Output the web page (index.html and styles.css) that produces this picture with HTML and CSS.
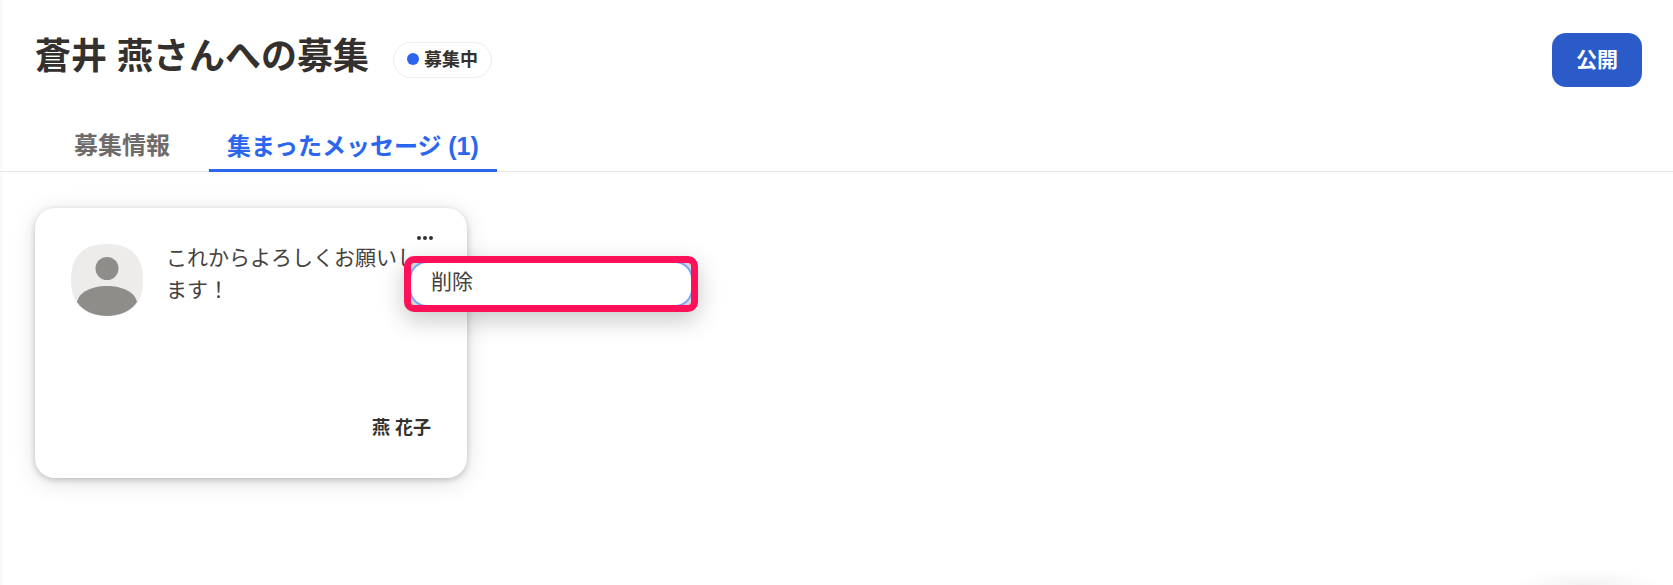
FILE: index.html
```html
<!DOCTYPE html>
<html lang="ja">
<head>
    <meta charset="UTF-8">
    <meta name="viewport" content="width=device-width, initial-scale=1.0">
    <title>蒼井 燕さんへの募集</title>
    <link rel="stylesheet" href="styles.css">
</head>
<body>
    <header class="page-header">
        <div class="title-group">
            <h1 class="page-title">蒼井 燕さんへの募集</h1>
            <span class="status-badge"><span class="status-dot"></span><span class="status-label">募集中</span></span>
        </div>
        <button class="publish-btn">公開</button>
    </header>

    <nav class="tabs">
        <a class="tab">募集情報</a>
        <a class="tab tab-active">集まったメッセージ <span class="tab-count">(1)</span></a>
    </nav>

    <main class="content">
        <div class="message-card">
            <button class="more-btn" aria-label="メニュー">
                <svg width="16" height="4" viewBox="0 0 16 4"><circle cx="2" cy="2" r="2"/><circle cx="8" cy="2" r="2"/><circle cx="14" cy="2" r="2"/></svg>
            </button>
            <div class="message-body">
                <svg class="avatar" width="72" height="72" viewBox="0 0 72 72">
                    <path class="avatar-bg" d="M36 0C60 0 72 12 72 36S60 72 36 72 0 60 0 36 12 0 36 0Z"/>
                    <circle class="avatar-fg" cx="36" cy="24.5" r="11.5"/>
                    <path class="avatar-fg" d="M6 58C8 48 21 42 36 42S64 48 66 58C60 67 48 72 36 72S12 67 6 58Z"/>
                </svg>
                <p class="message-text">これからよろしくお願いします！</p>
            </div>
            <div class="message-sender">燕 花子</div>
            <div class="context-menu">
                <div class="context-item">削除</div>
            </div>
        </div>
    </main>

    <div class="fab-shadow"></div>
</body>
</html>
```

FILE: styles.css
```css
* {
    box-sizing: border-box;
}
html, body {
    height: 100%;
}
body {
    margin: 0;
    background: #fff;
    color: #33302e;
    font-family: "Liberation Sans", "Noto Sans CJK JP", sans-serif;
    overflow: hidden;
    position: relative;
    box-shadow: inset 4px 0 4px -3px rgba(0, 0, 0, 0.05);
}
.page-header {
    display: flex;
    justify-content: space-between;
    align-items: flex-start;
    padding: 33px 31px 0 35px;
    height: 112px;
}
.title-group {
    display: flex;
    align-items: center;
    gap: 24px;
    padding-top: 5px;
}
.page-title {
    margin: -3px 0 3px;
    font-size: 36px;
    line-height: 44px;
    font-weight: 700;
}
.status-badge {
    display: flex;
    align-items: center;
    gap: 5px;
    height: 36px;
    padding: 0 13px;
    border: 1px solid #eeedec;
    border-radius: 18px;
    font-size: 18px;
    font-weight: 700;
}
.status-dot {
    width: 12px;
    height: 12px;
    margin-bottom: 2px;
    border-radius: 50%;
    background: #2b66ee;
}
.status-label {
    margin-bottom: 5px;
}
.publish-btn {
    width: 90px;
    height: 54px;
    padding: 0 0 4px;
    border: none;
    border-radius: 14px;
    background: #2a5bc8;
    color: #fff;
    font: 700 21px "Liberation Sans", "Noto Sans CJK JP", sans-serif;
}
.tabs {
    display: flex;
    gap: 21px;
    height: 60px;
    padding-left: 56px;
    border-bottom: 1px solid #e8e7e6;
}
.tab {
    padding: 17px 18px 0;
    height: 60px;
    font-size: 24px;
    line-height: 34px;
    font-weight: 700;
    color: #6f6b68;
}
.tab-active {
    color: #2b66ee;
    border-bottom: 3px solid #2b66ee;
}
.tab-count {
    font-size: 25px;
}
.content {
    padding: 36px 35px;
}
.message-card {
    position: relative;
    width: 432px;
    height: 270px;
    padding: 36px 36px 0;
    border-radius: 20px;
    background: #fff;
    box-shadow: 0 2px 6px rgba(0, 0, 0, 0.2), 0 4px 24px rgba(0, 0, 0, 0.12);
}
.more-btn {
    position: absolute;
    top: 28px;
    right: 34px;
    padding: 0;
    border: none;
    background: none;
    line-height: 0;
    fill: #33302e;
}
.message-body {
    display: flex;
    gap: 23px;
    height: 172px;
}
.avatar {
    flex: none;
}
.avatar-bg {
    fill: #edecea;
}
.avatar-fg {
    fill: #8f8d8a;
}
.message-text {
    margin: -2px 0 0;
    width: 256px;
    font-size: 21px;
    line-height: 32px;
    color: #45413f;
}
.message-sender {
    text-align: right;
    font-size: 18px;
    line-height: 24px;
    font-weight: 700;
}
.context-menu {
    position: absolute;
    top: 48px;
    left: 369px;
    width: 294px;
    height: 56px;
    border: 7px solid #ff1159;
    border-radius: 10px;
    background: #d8d8d8;
    overflow: hidden;
    box-shadow: 0 8px 24px rgba(0, 0, 0, 0.22);
}
.context-item {
    height: 46px;
    margin: -2px;
    padding: 0 20px;
    border: 2px solid #7aa7ff;
    border-radius: 18px;
    background: #fff;
    font-size: 21px;
    line-height: 38px;
    color: #45413f;
}
.fab-shadow {
    position: absolute;
    right: 10px;
    bottom: 0;
    width: 150px;
    height: 16px;
    background: radial-gradient(ellipse 50% 100% at 50% 100%, rgba(0, 0, 0, 0.05), rgba(0, 0, 0, 0));
}
```
